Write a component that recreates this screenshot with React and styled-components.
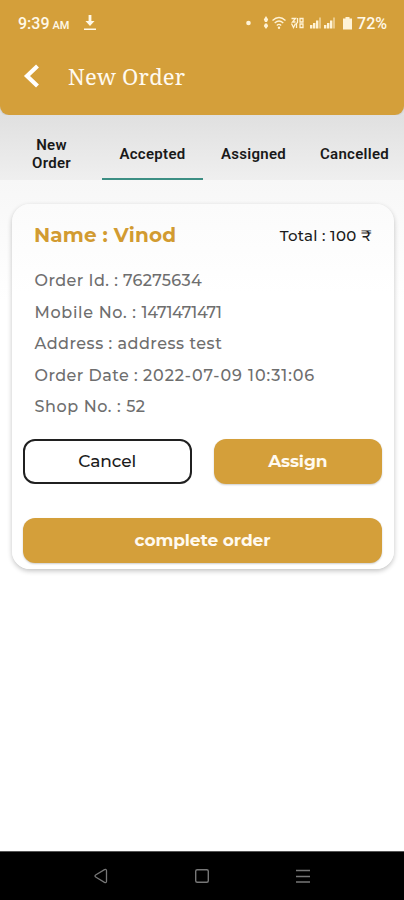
import React, { useState } from "react";
import styled, { createGlobalStyle } from "styled-components";

/////////////Styling/////////////////
const GlobalStyle = createGlobalStyle`
  * { box-sizing: border-box; }
  body { margin: 0; background: #fff; }
  button { border: 0; padding: 0; background: none; font: inherit; }
`;

const Screen = styled.div`
  width: 404px;
  height: 900px;
  display: flex;
  flex-direction: column;
  overflow: hidden;
  background: linear-gradient(#dedede 100px, #f7f7f7 180px, #ffffff 300px);
  font-family: Montserrat, Inter, "Noto Sans", sans-serif;
`;

const Header = styled.header`
  height: 115px;
  flex: none;
  background: #d49f3a;
  border-radius: 0 0 9px 9px;
  box-shadow: 0 1px 2px rgba(0, 0, 0, 0.12);
  color: #fff;
`;

const StatusBar = styled.div`
  height: 46px;
  padding: 0 17px 0 18px;
  display: flex;
  align-items: center;
  font-family: Roboto, sans-serif;
  font-weight: 500;
  font-size: 16px;
  color: #fff9e9;
`;

const Meridiem = styled.span`
  font-size: 11px;
  margin: 4px 14px 0 3px;
`;

const StatusIcons = styled.svg`
  margin-left: auto;
  margin-right: 3px;
`;

const TitleRow = styled.div`
  height: 60px;
  padding-left: 23px;
  display: flex;
  align-items: center;
`;

const BackButton = styled.button`
  width: 45px;
  height: 26px;
  text-align: left;
`;

const Title = styled.h1`
  margin: 0 0 1px;
  font-family: "Noto Serif", "DejaVu Serif", serif;
  font-weight: 400;
  font-size: 22px;
  letter-spacing: 0.2px;
  color: #fffaf0;
`;

const Tabs = styled.nav`
  height: 65px;
  flex: none;
  padding-left: 1px;
  display: grid;
  grid-template-columns: repeat(4, 101px);
  background: linear-gradient(#e0e0e0, #efefef);
`;

const Tab = styled.button`
  padding-top: 14px;
  border-bottom: 2px solid ${(props) => (props.$active ? "#3c8e83" : "transparent")};
  font-family: Roboto, sans-serif;
  font-weight: 600;
  font-size: 15px;
  line-height: 18px;
  letter-spacing: 0.3px;
  color: #191919;
  white-space: pre-line;
`;

const Card = styled.section`
  height: 365px;
  margin: 24px 10px 0 12px;
  padding: 15px 12px 6px 11px;
  border-radius: 18px;
  background: linear-gradient(#fbfbfb, #ffffff 90px);
  box-shadow: 0 2px 5px rgba(0, 0, 0, 0.24);
`;

const CardTop = styled.div`
  height: 32px;
  padding: 0 10px 0 11px;
  display: flex;
  justify-content: space-between;
  align-items: center;
`;

const Name = styled.h2`
  margin: 0;
  font-weight: 700;
  font-size: 20px;
  letter-spacing: 0.15px;
  white-space: nowrap;
  color: #d29b31;
`;

const Total = styled.span`
  margin-top: 1px;
  font-weight: 500;
  font-size: 15px;
  letter-spacing: 0.3px;
  white-space: nowrap;
  color: #1b1b1b;
`;

const Details = styled.ul`
  list-style: none;
  margin: 13px 0 0;
  padding: 0 0 0 11.5px;
`;

const Detail = styled.li`
  height: 31.5px;
  line-height: 33px;
  font-weight: 500;
  font-size: 16px;
  white-space: pre;
  color: #6e6e6e;
`;

const Part = styled.span`
  letter-spacing: ${(props) => props.$spacing}px;
`;

const Actions = styled.div`
  margin-top: 17px;
  display: grid;
  grid-template-columns: 1fr 1fr;
  gap: 34px 22px;
`;

const Button = styled.button`
  height: 45px;
  grid-column: ${(props) => (props.$wide ? "1 / -1" : "auto")};
  border: ${(props) => (props.$outline ? "2px solid #202020" : "0")};
  border-radius: 12px;
  background: ${(props) => (props.$outline ? "#fff" : "#d49f3a")};
  box-shadow: ${(props) => (props.$outline ? "none" : "0 1px 2px rgba(0, 0, 0, 0.2)")};
  color: ${(props) => (props.$outline ? "#1b1b1b" : "#fffaf0")};
  font-weight: ${(props) => (props.$outline ? 500 : 700)};
  font-size: 17px;
  line-height: 22px;
  letter-spacing: -0.1px;
`;

const NavBar = styled.footer`
  height: 49px;
  flex: none;
  margin-top: auto;
  padding: 0 50px;
  display: grid;
  grid-template-columns: repeat(3, 1fr);
  place-items: center;
  background: #000;
  border-top: 1px solid #555;
`;

////////////////Data////////////////////
const tabs = ["New\nOrder", "Accepted", "Assigned", "Cancelled"];

const details = [
  { label: "Order Id. : ", value: "76275634", labelSpacing: 0.45, valueSpacing: 0.3 },
  { label: "Mobile No. : ", value: "1471471471", labelSpacing: 0.68, valueSpacing: -0.25 },
  { label: "Address : ", value: "address test", labelSpacing: 0.5, valueSpacing: 0.52 },
  { label: "Order Date : ", value: "2022-07-09 10:31:06", labelSpacing: 0.45, valueSpacing: 0.95 },
  { label: "Shop No. : ", value: "52", labelSpacing: 0.6, valueSpacing: 0.6 },
];

////////////////App////////////////////
const App = () => {
  const [active, setActive] = useState(1);

  return (
    <Screen>
      <GlobalStyle />
      <Header>
        <StatusBar>
          9:39<Meridiem>AM</Meridiem>
          <svg width="14" height="18" viewBox="0 0 14 18" fill="#fff9e9">
            <path d="M5.6 1h2.800v6H11.500l-4.500 5L2.500 7h3.100zM1 14.500h12v1.400H1z" />
          </svg>
          <StatusIcons width="110" height="18" viewBox="0 0 110 18" fill="#fff3d6">
            <circle cx="4.5" cy="9" r="2.3" />
            <path d="M22 2l2.2 3.5L23 8h-2l-1.200-2.500zM21 9.500h2l1.200 2.500L22 15l-2.200-3z" />
            <g fill="none" stroke="#fff3d6" strokeWidth="1.300">
              <path d="M28.500 6.500q6.500-6 13 0M30.700 9q4.300-4 8.600 0M32.800 11.400q2.200-2 4.400 0" />
            </g>
            <circle cx="35" cy="13.800" r="1.200" />
            <g fill="none" stroke="#fff3d6" strokeWidth="1.300">
              <path d="M47.500 4.500h4l-3 3.500h3M47.500 9.500l2 4 2-4M53.500 4v4.500l-1 1V14M56 4.500h3V8h-3zM56 10h3v3.500h-3z" />
            </g>
            <path d="M66 11h2.400v3.500H66zM69 9h2.400v5.500H69zM72 6.500h2.400v8H72zM80 11h2.400v3.500H80zM83 9h2.400v5.500H83zM86 6.500h2.400v8H86z" />
            <path opacity=".5" d="M75 3.500h2v11h-2zM89 3.500h2v11h-2z" />
            <path d="M101.500 3h4v1.500h2.500v11h-9v-11h2.500z" />
          </StatusIcons>
          72%
        </StatusBar>
        <TitleRow>
          <BackButton>
            <svg width="18" height="26" viewBox="0 0 18 26">
              <path d="M14.500 3L4 13l10.500 10" fill="none" stroke="#fff" strokeWidth="4.200" />
            </svg>
          </BackButton>
          <Title>New Order</Title>
        </TitleRow>
      </Header>

      <Tabs>
        {tabs.map((tab, i) => (
          <Tab key={tab} $active={active === i} onClick={() => setActive(i)}>
            {tab}
          </Tab>
        ))}
      </Tabs>

      <Card>
        <CardTop>
          <Name>Name : Vinod</Name>
          <Total>Total : 100 ₹</Total>
        </CardTop>
        <Details>
          {details.map((item) => (
            <Detail key={item.label}>
              <Part $spacing={item.labelSpacing}>{item.label}</Part>
              <Part $spacing={item.valueSpacing}>{item.value}</Part>
            </Detail>
          ))}
        </Details>
        <Actions>
          <Button $outline>Cancel</Button>
          <Button>Assign</Button>
          <Button $wide>complete order</Button>
        </Actions>
      </Card>

      <NavBar>
        <svg width="16" height="16" viewBox="0 0 16 16" fill="none" stroke="#777" strokeWidth="1.300">
          <path d="M2 8q0-.7 1-1.300l8.500-5q2-.9 2 1v10.600q0 1.900-2 1l-8.500-5Q2 8.700 2 8z" />
        </svg>
        <svg width="16" height="16" viewBox="0 0 16 16" fill="none" stroke="#777" strokeWidth="1.400">
          <rect x="1.700" y="1.700" width="12.600" height="12.600" rx="1.500" />
        </svg>
        <svg width="16" height="16" viewBox="0 0 16 16" stroke="#777" strokeWidth="1.600">
          <path d="M1 2.500h14M1 8.500h14M1 14h14" />
        </svg>
      </NavBar>
    </Screen>
  );
};

export default App;
